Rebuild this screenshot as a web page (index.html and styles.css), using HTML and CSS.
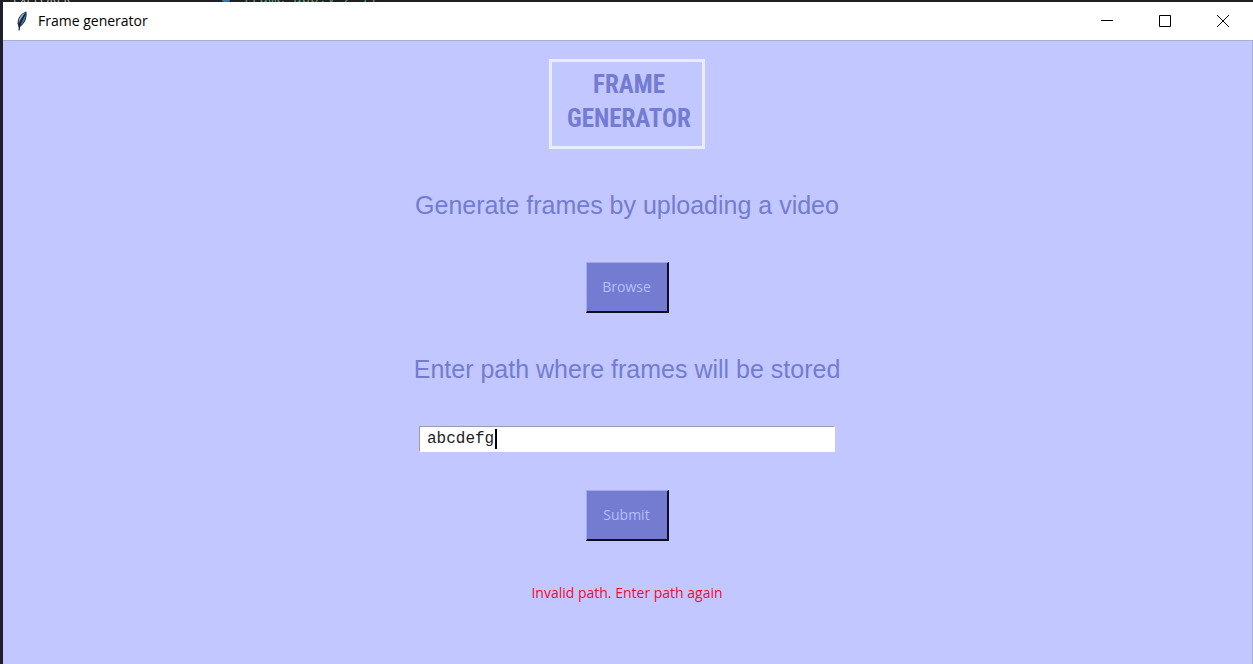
FILE: index.html
```
<!DOCTYPE html>
<html lang="en">
<head>
<meta charset="utf-8">
<title>Frame generator</title>
<link rel="stylesheet" href="styles.css">
</head>
<body>
<div class="backdrop" aria-hidden="true">
  <span class="backdrop-panel">EXPLORER</span>
  <span class="backdrop-dot"></span>
  <span class="backdrop-file">frame_app.y&nbsp;2 11</span>
</div>
<div class="window">
  <header class="titlebar">
    <svg class="feather" viewBox="0 0 16 20" aria-hidden="true">
      <path d="M11.500 0.500C7 1.500 2.500 6 2.500 12.500L3.500 16.500C9 14 12.500 8 11.500 0.500Z" fill="#26384e"/>
      <path d="M10.500 1.500C7 3 3.500 6.500 3.700 12C5 9 7.500 5 10.500 1.500Z" fill="#8db8e0"/>
      <path d="M10.800 3C10.500 8 8.500 11.500 5.500 14C6.500 10 9 6 10.800 3Z" fill="#4f7fae"/>
      <path d="M10 3L5 13L4 19.500" fill="none" stroke="#172230" stroke-width="1.200"/>
    </svg>
    <span class="window-title">Frame generator</span>
    <div class="window-controls">
      <button type="button" aria-label="Minimize"><svg viewBox="0 0 12 12"><path d="M0 5.500H12"/></svg></button>
      <button type="button" aria-label="Maximize"><svg viewBox="0 0 12 12"><path d="M.5 .5H11.500V11.500H.5Z"/></svg></button>
      <button type="button" aria-label="Close"><svg viewBox="0 0 12 12"><path d="M0 0L12 12M12 0L0 12"/></svg></button>
    </div>
  </header>
  <main class="content">
    <h1 class="logo"><span>FRAME</span><span>GENERATOR</span></h1>
    <p class="prompt">Generate frames by uploading a video</p>
    <button type="button" class="action">Browse</button>
    <label class="prompt" for="path">Enter path where frames will be stored</label>
    <div class="field">
      <input id="path" type="text" value="abcdefg" spellcheck="false">
      <span class="caret"></span>
    </div>
    <button type="button" class="action">Submit</button>
    <p class="error" role="alert">Invalid path. Enter path again</p>
  </main>
</div>
</body>
</html>
```
FILE: styles.css
```
* { box-sizing: border-box; }

body {
  margin: 0;
  min-height: 100vh;
  display: flex;
  flex-direction: column;
  background: #1f1e2a;
  font-family: "Open Sans", "Noto Sans", sans-serif;
}

.backdrop {
  display: flex;
  align-items: flex-end;
  height: 2px;
  overflow: hidden;
  padding-left: 13px;
  background: #201f22;
  font-size: 12px;
  line-height: 4px;
  color: #bdbdbd;
}

.backdrop-panel { width: 209px; }

.backdrop-dot {
  width: 8px;
  height: 2px;
  border-radius: 0 0 4px 4px;
  background: #3b77a0;
}

.backdrop-file {
  margin-left: 13px;
  font: 14px/6px "Liberation Mono", monospace;
  color: #5f9a72;
}

.window {
  flex: 1;
  display: flex;
  flex-direction: column;
  margin-left: 3px;
  background: #c2c8ff;
}

.titlebar {
  display: flex;
  align-items: center;
  height: 38px;
  background: #fff;
}

.feather {
  width: 16px;
  height: 20px;
  margin-left: 12px;
}

.window-title {
  margin-left: 7px;
  font-size: 14px;
  line-height: 20px;
  color: #000;
}

.window-controls {
  display: flex;
  margin-left: auto;
  padding-right: 1px;
}

.window-controls button {
  display: flex;
  align-items: center;
  justify-content: center;
  width: 58px;
  height: 38px;
  padding: 0;
  border: 0;
  background: none;
}

.window-controls svg {
  width: 12px;
  height: 12px;
  fill: none;
  stroke: #000;
  stroke-width: 1;
}

.content {
  flex: 1;
  display: flex;
  flex-direction: column;
  align-items: center;
  padding: 18px 1px 20px 0;
  border-top: 1px solid #a9aed9;
  border-right: 1px solid #a9aed9;
}

.logo {
  display: flex;
  flex-direction: column;
  align-items: center;
  width: 156px;
  height: 90px;
  margin: 0;
  padding: 6px 0 0 4px;
  border: 3px solid #e8edff;
  color: #737cd0;
  font: bold 25px/34px "Liberation Sans Narrow", "Roboto Condensed", "Open Sans Condensed", sans-serif;
}

.prompt {
  margin: 41px 0 42px;
  font: 25px/30px "Liberation Sans", Arial, sans-serif;
  color: #737cd0;
}

.action {
  width: 83px;
  height: 51px;
  padding: 0;
  border: solid;
  border-width: 1px 2px 2px 1px;
  border-color: #a2a9ea #0d0e20 #0d0e20 #a2a9ea;
  background: #737cd0;
  color: #b8bffa;
  font: 14px/20px "Open Sans", "Noto Sans", sans-serif;
}

.field {
  position: relative;
  width: 416px;
  margin-bottom: 38px;
}

.field input {
  display: block;
  width: 100%;
  height: 26px;
  padding: 0 7px;
  border: solid;
  border-width: 1px;
  border-color: #9a9ca8 #fff #fff #9a9ca8;
  border-radius: 0;
  outline: 0;
  background: #fff;
  color: #222;
  font: 16px/22px "Liberation Mono", monospace;
}

.caret {
  position: absolute;
  left: 76px;
  top: 3px;
  width: 2px;
  height: 20px;
  background: #000;
}

.error {
  margin: 42px 0 0;
  font-size: 14px;
  line-height: 20px;
  color: #f5082c;
}
```
